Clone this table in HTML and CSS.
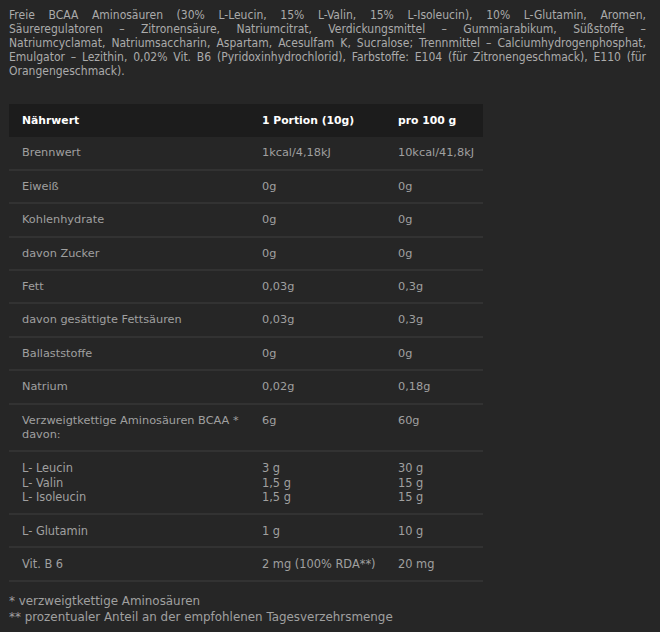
FILE: index.html
```html
<!DOCTYPE html>
<html lang="de">
<head>
    <meta charset="UTF-8">
    <meta name="viewport" content="width=device-width, initial-scale=1.0">
    <title>Zutaten und Nährwerte</title>
    <link rel="stylesheet" href="styles.css">
</head>
<body>

    <div class="content">
        <p class="ingredients">
            <span class="line">Freie BCAA Aminosäuren (30% L-Leucin, 15% L-Valin, 15% L-Isoleucin), 10% L-Glutamin, Aromen,</span>
            <span class="line">Säureregulatoren – Zitronensäure, Natriumcitrat, Verdickungsmittel – Gummiarabikum, Süßstoffe –</span>
            <span class="line">Natriumcyclamat, Natriumsaccharin, Aspartam, Acesulfam K, Sucralose; Trennmittel – Calciumhydrogenphosphat,</span>
            <span class="line">Emulgator – Lezithin, 0,02% Vit. B6 (Pyridoxinhydrochlorid), Farbstoffe: E104 (für Zitronengeschmack), E110 (für</span>
            <span class="line last">Orangengeschmack).</span>
        </p>

        <table class="nutrition">
            <thead>
                <tr>
                    <th class="col-name">Nährwert</th>
                    <th class="col-portion">1 Portion (10g)</th>
                    <th class="col-100">pro 100 g</th>
                </tr>
            </thead>
            <tbody>
                <tr><td>Brennwert</td><td>1kcal/4,18kJ</td><td>10kcal/41,8kJ</td></tr>
                <tr><td>Eiweiß</td><td>0g</td><td>0g</td></tr>
                <tr><td>Kohlenhydrate</td><td>0g</td><td>0g</td></tr>
                <tr><td>davon Zucker</td><td>0g</td><td>0g</td></tr>
                <tr><td>Fett</td><td>0,03g</td><td>0,3g</td></tr>
                <tr><td>davon gesättigte Fettsäuren</td><td>0,03g</td><td>0,3g</td></tr>
                <tr><td>Ballaststoffe</td><td>0g</td><td>0g</td></tr>
                <tr><td>Natrium</td><td>0,02g</td><td>0,18g</td></tr>
                <tr><td>Verzweigtkettige Aminosäuren BCAA *<br>davon:</td><td>6g</td><td>60g</td></tr>
                <tr class="wide">
                    <td>L- Leucin<br>L- Valin<br>L- Isoleucin</td>
                    <td>3 g<br>1,5 g<br>1,5 g</td>
                    <td>30 g<br>15 g<br>15 g</td>
                </tr>
                <tr class="wide"><td>L- Glutamin</td><td>1 g</td><td>10 g</td></tr>
                <tr class="wide"><td>Vit. B 6</td><td>2 mg (100% RDA**)</td><td>20 mg</td></tr>
            </tbody>
        </table>

        <div class="notes">
            <p>* verzweigtkettige Aminosäuren</p>
            <p>** prozentualer Anteil an der empfohlenen Tagesverzehrsmenge</p>
        </div>
    </div>

</body>
</html>
```

FILE: styles.css
```css
body {
    margin: 0;
    background: #262626;
    color: #a0a0a0;
    font-family: "DejaVu Sans", sans-serif;
    font-size: 11.3px;
}

.content {
    width: 637px;
    padding: 8px 9px;
}

.ingredients {
    margin: 0 0 26px;
    font-family: "DejaVu Sans Condensed", "DejaVu Sans", sans-serif;
    font-size: 12px;
    line-height: 14px;
    color: #ababab;
}

.ingredients .line {
    display: block;
    text-align: justify;
    text-align-last: justify;
}

.ingredients .last {
    text-align-last: left;
}

.nutrition {
    width: 474px;
    table-layout: fixed;
    border-collapse: collapse;
}

.nutrition th,
.nutrition td {
    text-align: left;
    vertical-align: top;
    white-space: nowrap;
    padding: 9px 0 8px 13px;
    line-height: 14.4px;
}

.nutrition th {
    background: #1c1c1c;
    color: #fff;
    font-size: 10.8px;
    font-weight: bold;
    padding-top: 10px;
    padding-bottom: 9px;
}

.nutrition td {
    border-bottom: 2px solid #323232;
}

.col-name {
    width: 227px;
}

.col-portion {
    width: 123px;
}

.wide td {
    font-size: 11.4px;
}

.notes {
    margin-top: 11px;
    font-size: 11.9px;
    line-height: 16px;
}

.notes p {
    margin: 0;
}
```
